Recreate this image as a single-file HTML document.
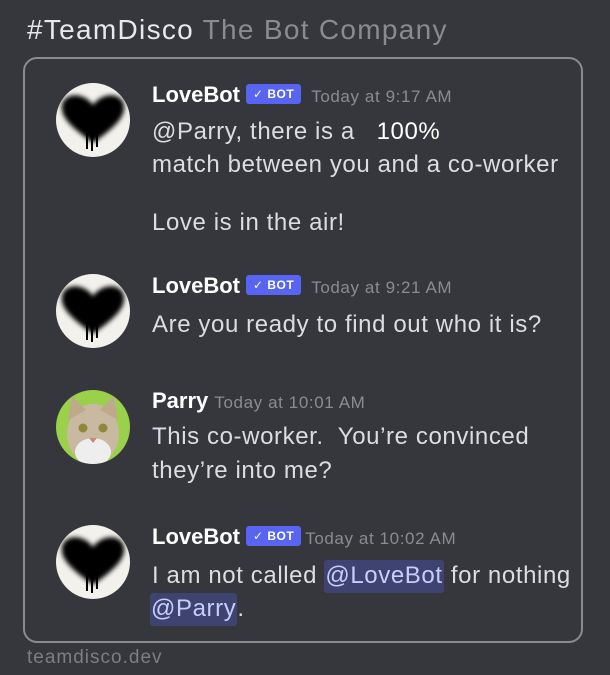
<!DOCTYPE html>
<html><head><meta charset="utf-8"><style>
*{margin:0;padding:0;box-sizing:border-box}
body{width:610px;height:675px;background:#36373d;font-family:"Liberation Sans","DejaVu Sans",sans-serif;position:relative;overflow:hidden;color:#dcdde0}
.a{position:absolute;white-space:nowrap}
.box{position:absolute;left:23px;top:57px;width:560px;height:586px;border:2px solid #8a8b90;border-radius:14px}
.name{font-size:22px;color:#fff;font-weight:bold}
.ts{font-size:17px;color:#8a8c92;letter-spacing:0.6px;font-weight:normal}
.b{font-size:24px;color:#dcdde0;letter-spacing:0.6px}
.bot{display:inline-block;background:#5865f2;color:#fff;font-size:12px;font-weight:bold;padding:3px 7px;border-radius:3px;vertical-align:4px;margin:0 10px 0 6px;letter-spacing:0.5px}
.m{background:#3f4370;color:#c9cdfb;border-radius:3px;padding:2px 1px 4px}
.av{position:absolute;width:74px;height:74px;border-radius:50%;overflow:hidden}
</style></head><body>
<div class="a" style="left:27px;top:14px;font-size:28px;color:#e8e8ea;letter-spacing:1.3px">#TeamDisco <span style="color:#8a8b90">The Bot Company</span></div>
<div class="box"></div>
<svg width="0" height="0" style="position:absolute"><defs><filter id="f"><feGaussianBlur stdDeviation="2.5"/></filter></defs></svg>

<svg class="av" style="left:56px;top:83px" viewBox="0 0 74 74"><rect width="74" height="74" fill="#f3f1ec"/><path d="M37 60 C18 46 4 35 6 22 C8 10 27 8 37 22 C47 8 66 10 68 22 C70 35 56 46 37 60Z" fill="#000" filter="url(#f)"/><path d="M31 50v16M36 52v16M41 52v12" stroke="#000" stroke-width="2"/></svg>
<div class="a name" style="left:152px;top:82px">LoveBot<span class="bot">✓ BOT</span><span class="ts">Today at 9:17 AM</span></div>
<div class="a b" style="left:152px;top:118px">@Parry, there is a &nbsp; <span style="color:#fff">100%</span></div>
<div class="a b" style="left:152px;top:151px">match between you and a co-worker</div>
<div class="a b" style="left:152px;top:209px">Love is in the air!</div>

<svg class="av" style="left:56px;top:274px" viewBox="0 0 74 74"><rect width="74" height="74" fill="#f3f1ec"/><path d="M37 60 C18 46 4 35 6 22 C8 10 27 8 37 22 C47 8 66 10 68 22 C70 35 56 46 37 60Z" fill="#000" filter="url(#f)"/><path d="M31 50v16M36 52v16M41 52v12" stroke="#000" stroke-width="2"/></svg>
<div class="a name" style="left:152px;top:273px">LoveBot<span class="bot">✓ BOT</span><span class="ts">Today at 9:21 AM</span></div>
<div class="a b" style="left:152px;top:311px">Are you ready to find out who it is?</div>

<svg class="av" style="left:56px;top:390px" viewBox="0 0 74 74"><rect width="74" height="74" fill="#9bd04a"/><ellipse cx="37" cy="44" rx="26" ry="30" fill="#c9b9a0"/><path d="M12 30 L16 6 L30 20Z M62 30 L58 6 L44 20Z" fill="#bfa98c"/><ellipse cx="37" cy="62" rx="18" ry="14" fill="#eee"/><circle cx="27" cy="38" r="4.5" fill="#8c8a3a"/><circle cx="47" cy="38" r="4.5" fill="#8c8a3a"/><path d="M33 48h8l-4 5z" fill="#c98a7a"/></svg>
<div class="a name" style="left:152px;top:388px">Parry <span class="ts">Today at 10:01 AM</span></div>
<div class="a b" style="left:152px;top:423px">This co-worker.&nbsp; You’re convinced</div>
<div class="a b" style="left:152px;top:457px">they’re into me?</div>

<svg class="av" style="left:56px;top:525px" viewBox="0 0 74 74"><rect width="74" height="74" fill="#f3f1ec"/><path d="M37 60 C18 46 4 35 6 22 C8 10 27 8 37 22 C47 8 66 10 68 22 C70 35 56 46 37 60Z" fill="#000" filter="url(#f)"/><path d="M31 50v16M36 52v16M41 52v12" stroke="#000" stroke-width="2"/></svg>
<div class="a name" style="left:152px;top:524px">LoveBot<span class="bot" style="margin-right:4px">✓ BOT</span><span class="ts">Today at 10:02 AM</span></div>
<div class="a b" style="left:152px;top:562px">I am not called <span class="m">@LoveBot</span> for nothing</div>
<div class="a b" style="left:150px;top:595px"><span class="m">@Parry</span>.</div>

<div class="a" style="left:27px;top:647px;font-size:19px;color:#7d7e84;letter-spacing:1px">teamdisco.dev</div>
</body></html>
